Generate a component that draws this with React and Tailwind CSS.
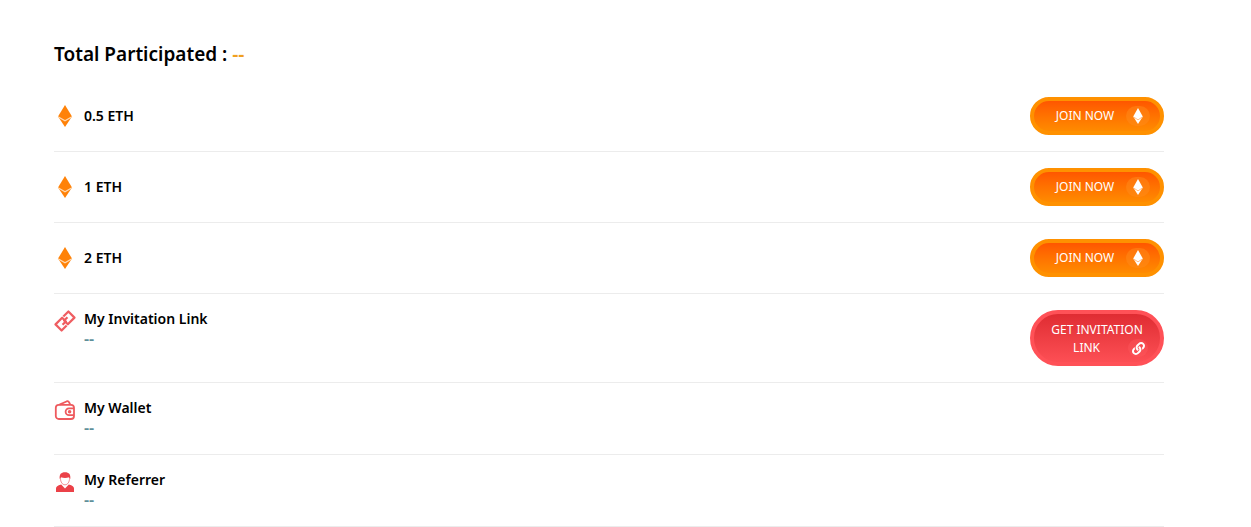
const pools = ['0.5 ETH', '1 ETH', '2 ETH'];

const EthIcon = () => (
  <svg viewBox="0 0 22 22" className="h-[22px] w-[22px] shrink-0" aria-hidden="true">
    <path d="M11 0 4 11.600 11 22l7-10.400z" fill="#ff8208" />
    <path d="M4 11.800 11 15.800l7-4" fill="none" stroke="#ffd9b0" strokeWidth="1.300" />
  </svg>
);

const ChainIcon = () => (
  <svg viewBox="0 0 22 22" className="h-[22px] w-[22px] shrink-0" fill="none" stroke="#ef5d61" strokeWidth="2.200" aria-hidden="true">
    <g transform="rotate(-45 11 11)" strokeLinejoin="round">
      <path d="M9 15.300H1.900V6.700h9.400v5.200H6.600" />
      <path d="M13 6.700h7.100v8.600h-9.400v-5.200h4.700" />
    </g>
  </svg>
);

const WalletIcon = () => (
  <svg viewBox="0 0 22 22" className="h-[22px] w-[22px] shrink-0" fill="none" stroke="#ee5a5e" strokeWidth="1.800" strokeLinejoin="round" aria-hidden="true">
    <rect x="1.800" y="5.800" width="18.200" height="14.200" rx="3" />
    <path d="M5.500 5.600 13 2.200c1.200-.4 2 .2 3.200 3.400" />
    <path d="M20 9.400h-5a3.400 3.400 0 0 0 0 6.800h5" />
    <circle cx="15.600" cy="12.800" r="0.900" fill="#ee5a5e" />
  </svg>
);

const PersonIcon = () => (
  <svg viewBox="0 0 22 22" className="h-[22px] w-[22px] shrink-0" fill="#eb4148" aria-hidden="true">
    <path d="M2 21v-3.400c0-2 1.400-3.200 5.200-4.200L11 17.500l3.800-4.100c3.800 1 5.200 2.200 5.200 4.200V21z" />
    <path d="M6.500 7.500C6.500 4 8 2.500 11 2.500S15.500 4 15.500 7.500c0 3.400-1.800 6.300-4.500 6.300s-4.500-2.900-4.500-6.300z" fill="#fff" stroke="#ee7478" strokeWidth="0.800" />
    <path d="M5.700 8C5.200 3.200 7 1.200 11 1.200S16.800 3.200 16.300 8l-1.300-1.700c-2.400.8-5.600.8-8 0z" />
  </svg>
);

const JoinButton = () => (
  <button
    type="button"
    className="flex h-[38px] w-[134px] items-center justify-center gap-3 rounded-full border-4 border-[#ff9100] bg-linear-to-b from-[#ff4d00] to-[#ff9100] bg-origin-border pl-3 text-xs text-white"
  >
    JOIN NOW
    <span className="flex h-5 w-6 items-center justify-center rounded-full bg-[#ff8c1a]/50">
      <svg viewBox="0 0 10 16" className="h-4 w-[10px]" aria-hidden="true">
        <path d="M5 0 .2 8.600 5 16l4.800-7.400z" fill="#fff" />
        <path d="M.4 8.900 5 11.800l4.600-2.900" fill="none" stroke="#ffb980" strokeWidth="0.900" />
      </svg>
    </span>
  </button>
);

const InviteButton = () => (
  <button
    type="button"
    className="w-[134px] rounded-[28px] border-4 border-[#ff5157] bg-linear-to-b from-[#dd282f] to-[#ff5157] bg-origin-border px-3 pt-[7px] pb-[5px] text-xs leading-[18px] text-white"
  >
    GET INVITATION
    <span className="flex items-center justify-end gap-7">
      LINK
      <span className="flex h-[18px] w-5 items-center justify-center rounded-full bg-[#ff5a5f]/40">
        <svg viewBox="0 0 512 512" className="h-[13px] w-[13px]" fill="#fff" aria-hidden="true">
          <path d="M326.612 185.391c59.747 59.809 58.927 155.698.36 214.590-.11.12-.24.25-.36.37l-67.200 67.200c-59.270 59.270-155.699 59.262-214.960 0-59.270-59.260-59.270-155.700 0-214.960l37.106-37.106c9.840-9.840 26.786-3.300 27.294 10.606.648 17.722 3.826 35.527 9.690 52.721 1.986 5.822.567 12.262-3.783 16.612l-13.087 13.087c-28.026 28.026-28.905 73.660-1.155 101.960 28.024 28.579 74.086 28.749 102.325.510l67.200-67.190c28.191-28.191 28.073-73.757 0-101.830-3.701-3.694-7.429-6.564-10.341-8.569a16.037 16.037 0 0 1-6.947-12.606c-.396-10.567 3.348-21.456 11.698-29.806l21.054-21.055c5.521-5.521 14.182-6.199 20.584-1.731a152.482 152.482 0 0 1 20.522 17.197zM467.547 44.449c-59.261-59.262-155.690-59.270-214.960 0l-67.200 67.200c-.12.12-.25.25-.36.37-58.566 58.892-59.387 154.781.36 214.590a152.454 152.454 0 0 0 20.521 17.196c6.402 4.468 15.064 3.789 20.584-1.731l21.054-21.055c8.350-8.350 12.094-19.239 11.698-29.806a16.037 16.037 0 0 0-6.947-12.606c-2.912-2.005-6.640-4.875-10.341-8.569-28.073-28.073-28.191-73.639 0-101.830l67.200-67.190c28.239-28.239 74.300-28.069 102.325.510 27.750 28.300 26.872 73.934-1.155 101.960l-13.087 13.087c-4.350 4.350-5.769 10.790-3.783 16.612 5.864 17.194 9.042 34.999 9.690 52.721.509 13.906 17.454 20.446 27.294 10.606l37.106-37.106c59.271-59.259 59.271-155.699.001-214.959z" />
        </svg>
      </span>
    </span>
  </button>
);

const InfoRow = ({ icon, title, children }) => (
  <li className="flex items-start justify-between border-b border-[#ececec] py-4">
    <div className="flex gap-2">
      {icon}
      <div>
        <h3 className="text-sm leading-[18px] font-semibold text-black">{title}</h3>
        <p className="mt-px text-base leading-5 font-semibold text-[#5f8f99]">--</p>
      </div>
    </div>
    {children}
  </li>
);

const App = () => {
  return (
    <main className="min-h-screen bg-white pt-10 pr-[87px] pl-[54px] font-['Noto_Sans',sans-serif]">
      <h2 className="mb-[13px] text-[19px] leading-7 font-semibold text-black">
        Total Participated : <span className="text-[#f0a020]">--</span>
      </h2>

      <ul>
        {pools.map((pool) => (
          <li key={pool} className="flex items-center justify-between border-b border-[#ececec] py-4">
            <div className="flex items-center gap-2">
              <EthIcon />
              <h3 className="text-sm font-semibold text-black">{pool}</h3>
            </div>
            <JoinButton />
          </li>
        ))}

        <InfoRow icon={<ChainIcon />} title="My Invitation Link">
          <InviteButton />
        </InfoRow>
        <InfoRow icon={<WalletIcon />} title="My Wallet" />
        <InfoRow icon={<PersonIcon />} title="My Referrer" />
      </ul>
    </main>
  );
};

export default App;
